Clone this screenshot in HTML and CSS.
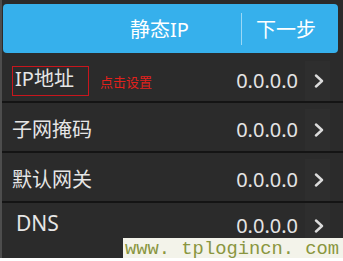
FILE: index.html
```html
<!DOCTYPE html>
<html lang="zh-CN">
<head>
<meta charset="utf-8">
<title>静态IP</title>
<link rel="stylesheet" href="styles.css">
</head>
<body>
<div class="screen">
  <header class="topbar">
    <span class="title">静态IP</span>
    <span class="divider"></span>
    <span class="next">下一步</span>
  </header>
  <ul class="list">
    <li class="row">
      <span class="label boxed">IP地址</span>
      <span class="hint">点击设置</span>
      <span class="value">0.0.0.0</span>
      <span class="arrow"><svg width="10" height="14" viewBox="0 0 10 14"><polyline points="2,1.5 8,7 2,12.5" fill="none" stroke="#dcdcdc" stroke-width="2.4" stroke-linecap="round" stroke-linejoin="round"/></svg></span>
    </li>
    <li class="row">
      <span class="label">子网掩码</span>
      <span class="value">0.0.0.0</span>
      <span class="arrow"><svg width="10" height="14" viewBox="0 0 10 14"><polyline points="2,1.5 8,7 2,12.5" fill="none" stroke="#dcdcdc" stroke-width="2.4" stroke-linecap="round" stroke-linejoin="round"/></svg></span>
    </li>
    <li class="row">
      <span class="label">默认网关</span>
      <span class="value">0.0.0.0</span>
      <span class="arrow"><svg width="10" height="14" viewBox="0 0 10 14"><polyline points="2,1.5 8,7 2,12.5" fill="none" stroke="#dcdcdc" stroke-width="2.4" stroke-linecap="round" stroke-linejoin="round"/></svg></span>
    </li>
    <li class="row row-last">
      <span class="label label-dns">DNS</span>
      <span class="value">0.0.0.0</span>
      <span class="arrow"><svg width="10" height="14" viewBox="0 0 10 14"><polyline points="2,1.5 8,7 2,12.5" fill="none" stroke="#dcdcdc" stroke-width="2.4" stroke-linecap="round" stroke-linejoin="round"/></svg></span>
    </li>
  </ul>
  <div class="watermark">www. tplogincn. com</div>
</div>
</body>
</html>
```
FILE: styles.css
```css
html, body {
  margin: 0;
  padding: 0;
  background: #ffffff;
}

.screen {
  position: relative;
  width: 343px;
  height: 258px;
  box-sizing: border-box;
  padding-top: 4px;
  background: #2b2b2b;
  border-left: 2px solid #4d4d4d;
  font-family: "Noto Sans", "Noto Sans CJK SC", sans-serif;
  color: #e6e6e6;
}

.topbar {
  display: flex;
  align-items: center;
  width: 335px;
  height: 49px;
  margin-left: 1px;
  background: #36b0ec;
  border-radius: 4px;
  color: #ffffff;
  font-size: 20px;
}

.title {
  width: 238px;
  box-sizing: border-box;
  padding-left: 127px;
  white-space: nowrap;
}

.divider {
  width: 1px;
  height: 32px;
  background: #9ad8f6;
}

.next {
  margin-left: 14px;
  white-space: nowrap;
}

.list {
  list-style: none;
  margin: 2px 0 0;
  padding: 0;
}

.row {
  display: flex;
  align-items: center;
  height: 48px;
  box-sizing: border-box;
  padding: 6px 13px 0 10px;
  border-bottom: 2px solid #141414;
}

.row + .row {
  height: 50px;
}

.row.row-last {
  height: 46px;
  padding-top: 0;
  border-bottom: none;
}

.label {
  font-size: 20px;
  line-height: 24px;
  white-space: nowrap;
}

.boxed {
  display: flex;
  align-items: flex-start;
  width: 77px;
  height: 30px;
  box-sizing: border-box;
  padding-left: 2px;
  border: 1px solid #c8161d;
}

.label-dns {
  font-size: 21px;
  margin-left: 4px;
  margin-bottom: 6px;
}

.hint {
  margin-left: 11px;
  font-size: 13px;
  color: #e3211c;
  white-space: nowrap;
}

.value {
  margin-left: auto;
  margin-right: 7px;
  font-size: 20px;
  line-height: 22px;
  color: #e4e4e4;
}

.arrow {
  display: flex;
  align-items: center;
  align-self: stretch;
  width: 25px;
  box-sizing: border-box;
  padding-left: 9px;
  background: #2e2e2e;
}

.arrow svg {
  display: block;
}

.watermark {
  position: absolute;
  left: 121px;
  right: 0;
  top: 238px;
  height: 23px;
  box-sizing: border-box;
  padding-left: 2px;
  background: #f3f3ea;
  color: #8a963f;
  font-family: "Liberation Mono", monospace;
  font-size: 18.8px;
  line-height: 23px;
  white-space: nowrap;
}
```
